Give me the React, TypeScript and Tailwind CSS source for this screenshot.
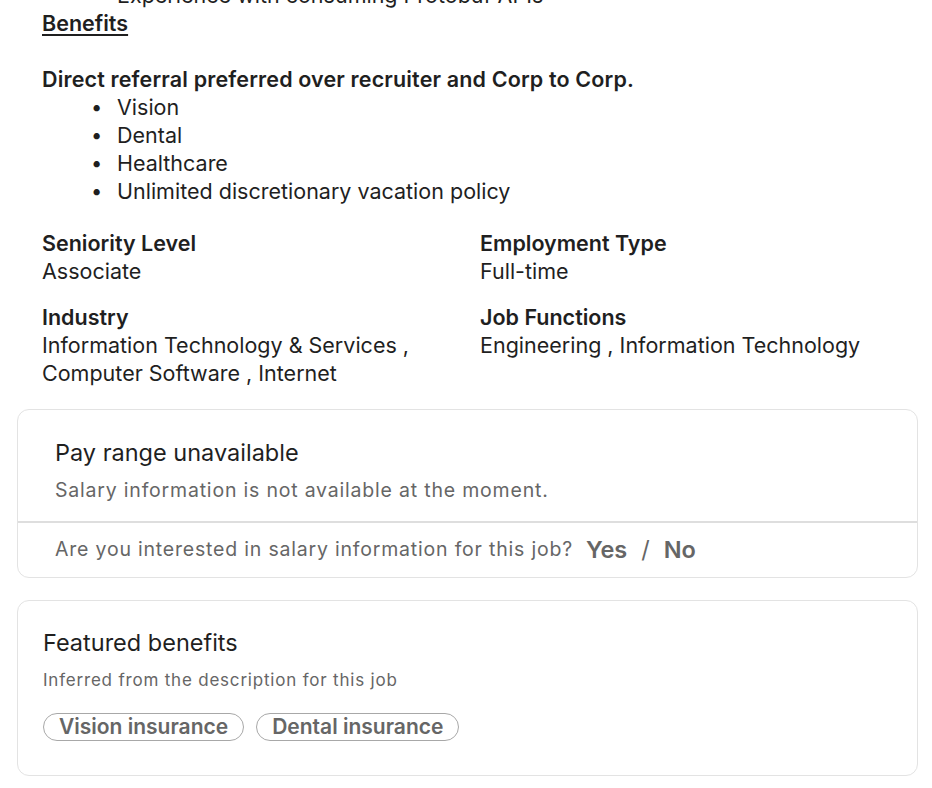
const font = { fontFamily: "Inter, 'Noto Sans', sans-serif" };

function Bullet({ children }: { children: React.ReactNode }) {
  return (
    <li className="flex items-center h-[28px]">
      <span className="w-[75px] pl-[49px] text-[20px]">•</span>
      <span>{children}</span>
    </li>
  );
}

function Criteria({ label, value }: { label: string; value: React.ReactNode }) {
  return (
    <div>
      <h3 className="font-semibold leading-[28px]">{label}</h3>
      <p className="leading-[28px]">{value}</p>
    </div>
  );
}

export default function App() {
  return (
    <div
      className="w-[932px] h-[788px] overflow-hidden bg-white text-[21.5px] text-[#1f1f1f]"
      style={font}
    >
      <div className="mt-[-19px] px-[42px] leading-[28px]">
        <ul>
          <Bullet>Experience with consuming Protobuf APIs</Bullet>
        </ul>
        <p className="font-semibold underline underline-offset-[3px] decoration-2">Benefits</p>
        <p className="h-[28px]" />
        <p className="font-semibold tracking-[0.15px]">
          Direct referral preferred over recruiter and Corp to Corp.
        </p>
        <ul>
          <Bullet>Vision</Bullet>
          <Bullet>Dental</Bullet>
          <Bullet>Healthcare</Bullet>
          <Bullet>Unlimited discretionary vacation policy</Bullet>
        </ul>

        <div className="mt-[24px] grid grid-cols-[438px_1fr] gap-y-[18px]">
          <Criteria label="Seniority Level" value="Associate" />
          <Criteria label="Employment Type" value="Full-time" />
          <Criteria
            label="Industry"
            value={
              <>
                Information Technology &amp; Services ,<br />
                Computer Software , Internet
              </>
            }
          />
          <Criteria label="Job Functions" value="Engineering , Information Technology" />
        </div>
      </div>

      <section className="mx-[17px] mt-[22px] w-[901px] rounded-[12px] border border-[#e3e3e3]">
        <div className="px-[37px] pt-[27px] pb-[19px]">
          <h2 className="text-[23.5px] leading-[32px] text-[#1f1f1f]">Pay range unavailable</h2>
          <p className="mt-[9px] text-[19.5px] tracking-[0.8px] leading-[24px] text-[#666]">
            Salary information is not available at the moment.
          </p>
        </div>
        <div className="border-t-2 border-[#dedede] px-[37px] h-[56px] flex items-center">
          <span className="text-[19.5px] tracking-[0.8px] text-[#666]">
            Are you interested in salary information for this job?
          </span>
          <button className="ml-[13px] text-[23.5px] font-semibold text-[#666]">Yes</button>
          <span className="mx-[14px] text-[23.5px] text-[#666]">/</span>
          <button className="text-[23.5px] font-semibold text-[#666]">No</button>
        </div>
      </section>

      <section className="mx-[17px] mt-[22px] w-[901px] h-[176px] rounded-[12px] border border-[#e3e3e3] px-[25px] pt-[26px]">
        <h2 className="text-[23.5px] leading-[32px] text-[#1f1f1f]">Featured benefits</h2>
        <p className="mt-[10px] text-[17px] tracking-[0.8px] leading-[22px] text-[#666]">
          Inferred from the description for this job
        </p>
        <div className="mt-[22px] flex gap-[12px]">
          <span className="h-[28px] px-[15px] rounded-full border border-[#a8a8a8] flex items-center text-[21px] font-semibold text-[#666]">
            Vision insurance
          </span>
          <span className="h-[28px] px-[15px] rounded-full border border-[#a8a8a8] flex items-center text-[21px] font-semibold text-[#666]">
            Dental insurance
          </span>
        </div>
      </section>
    </div>
  );
}
